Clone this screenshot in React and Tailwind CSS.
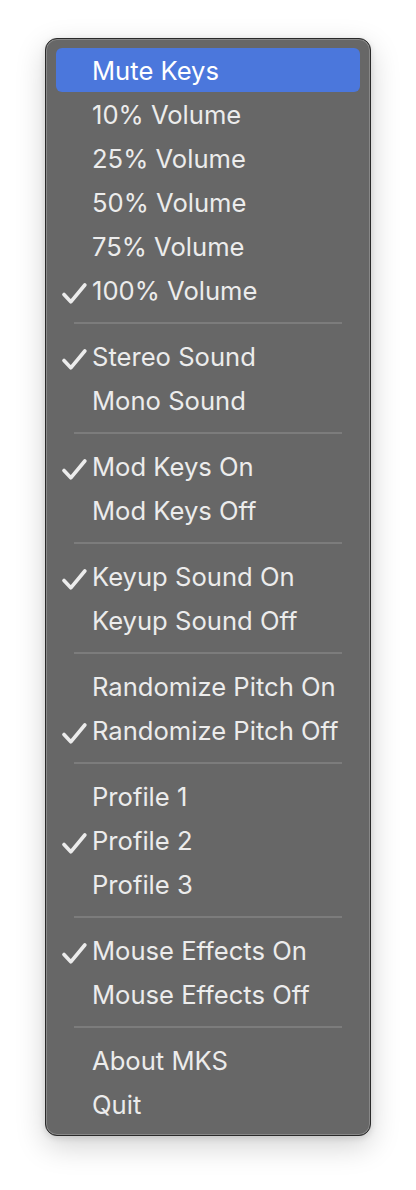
import React from "react";

const groups = [
  [
    { label: "Mute Keys", active: true },
    { label: "10% Volume" },
    { label: "25% Volume" },
    { label: "50% Volume" },
    { label: "75% Volume" },
    { label: "100% Volume", checked: true },
  ],
  [{ label: "Stereo Sound", checked: true }, { label: "Mono Sound" }],
  [{ label: "Mod Keys On", checked: true }, { label: "Mod Keys Off" }],
  [{ label: "Keyup Sound On", checked: true }, { label: "Keyup Sound Off" }],
  [{ label: "Randomize Pitch On" }, { label: "Randomize Pitch Off", checked: true }],
  [{ label: "Profile 1" }, { label: "Profile 2", checked: true }, { label: "Profile 3" }],
  [{ label: "Mouse Effects On", checked: true }, { label: "Mouse Effects Off" }],
  [{ label: "About MKS" }, { label: "Quit" }],
];

function Check() {
  return (
    <svg
      width="25"
      height="21"
      viewBox="0 0 25 21"
      className="absolute left-[6px] top-[15px]"
    >
      <path
        d="M2 11.5 L8.8 18.8 L22.8 2"
        fill="none"
        stroke="#ececec"
        strokeWidth="3.6"
        strokeLinecap="round"
        strokeLinejoin="round"
      />
    </svg>
  );
}

function Item({ label, active, checked }) {
  return (
    <div
      className={`relative h-[44px] flex items-center pl-[36px] rounded-[6px] text-[25.6px] leading-none ${
        active ? "bg-[#4b77dc] text-white" : "text-[#ececec]"
      }`}
    >
      {checked && <Check />}
      <span className="pt-[2px]">{label}</span>
    </div>
  );
}

export default function App() {
  return (
    <div className="min-h-[1190px] bg-white pt-[38px] pl-[45px]" style={{ fontFamily: "Inter, 'Liberation Sans', sans-serif" }}>
      <div className="w-[326px] rounded-[12px] border border-[#2a2a2a] bg-[#676767] px-[10px] py-[9px] shadow-[inset_0_0_0_1px_rgba(255,255,255,0.22),0_10px_30px_rgba(0,0,0,0.18),0_2px_6px_rgba(0,0,0,0.12)]">
        {groups.map((g, gi) => (
          <div key={gi}>
            {gi > 0 && (
              <div className="h-[22px] flex items-center px-[18px]">
                <div className="h-[2px] w-full bg-[#7c7c7c]" />
              </div>
            )}
            {g.map((it) => (
              <Item key={it.label} {...it} />
            ))}
          </div>
        ))}
      </div>
    </div>
  );
}
